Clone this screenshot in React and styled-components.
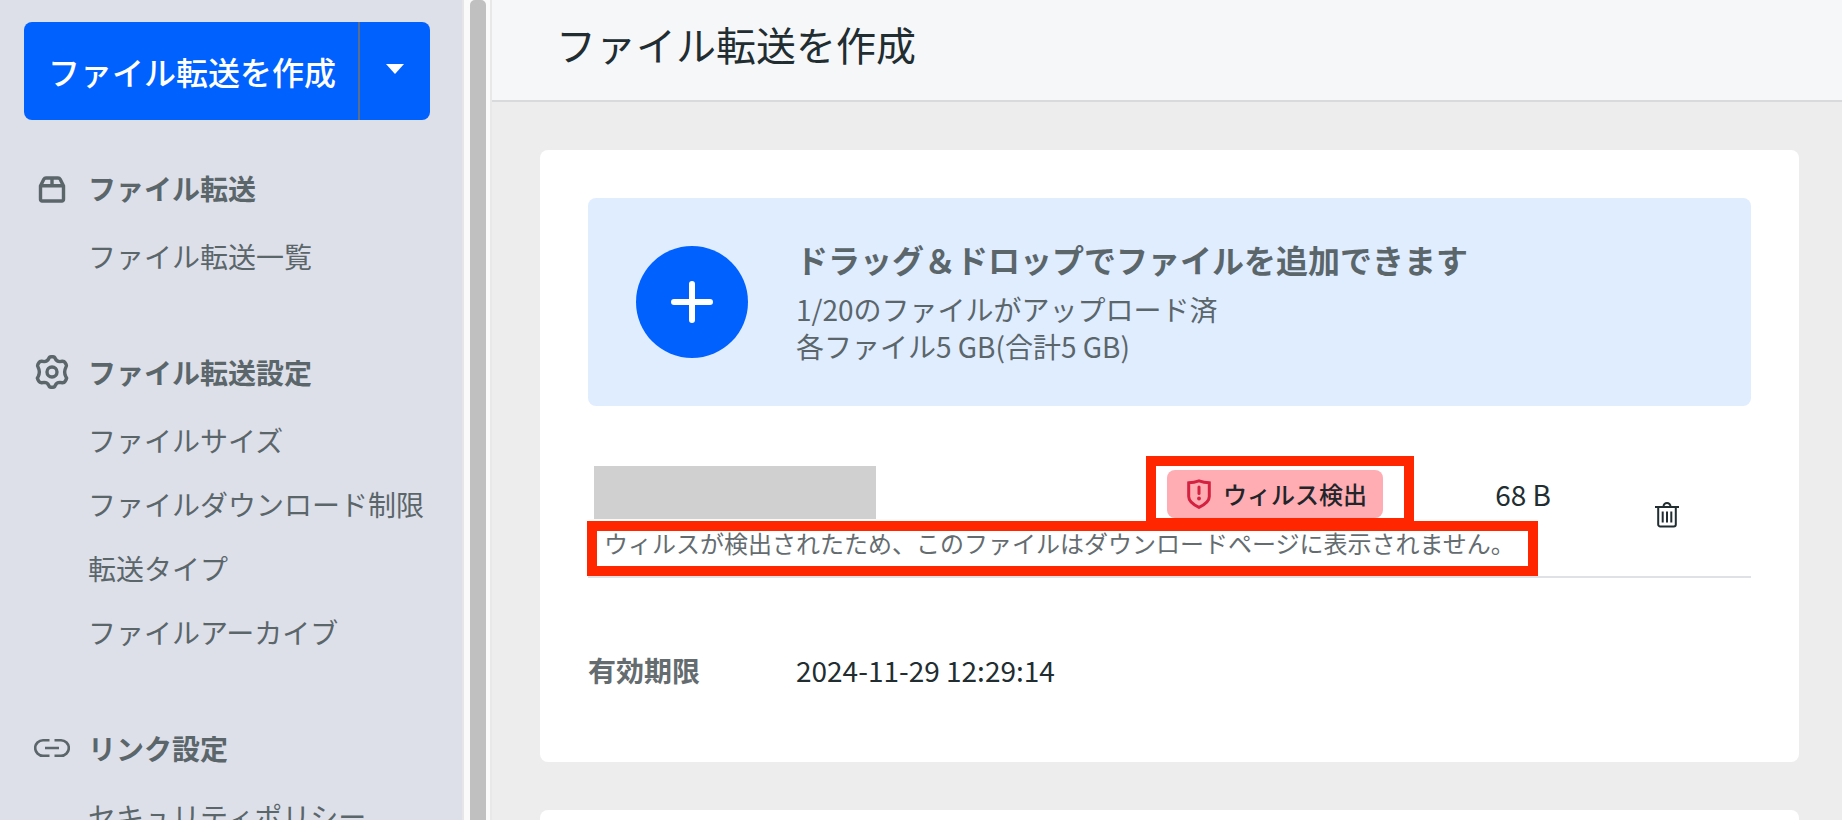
import React from 'react'
import styled, { createGlobalStyle } from 'styled-components'

const sections = [
  { title: 'ファイル転送', icon: 'box', items: ['ファイル転送一覧'] },
  {
    title: 'ファイル転送設定',
    icon: 'gear',
    items: ['ファイルサイズ', 'ファイルダウンロード制限', '転送タイプ', 'ファイルアーカイブ'],
  },
  { title: 'リンク設定', icon: 'link', items: ['セキュリティポリシー'] },
]

const icons = {
  box: (
    <>
      <path d="M6.5 16v13.500a1.500 1.500 0 0 0 1.500 1.500h20a1.500 1.500 0 0 0 1.500-1.500V16L26.200 9.300a2.500 2.500 0 0 0-2.200-1.300H12a2.500 2.500 0 0 0-2.200 1.300z" />
      <path d="M6.500 15.800h23M18 8v8" />
    </>
  ),
  gear: (
    <>
      <path d="M14.800 4.500Q15.300 2.800 17 2.800H19Q20.700 2.800 21.200 4.500Q22.500 7.500 25.800 7.600L28.200 7.300Q30.300 7.200 31.100 8.600L32.200 10.600Q33 12.200 31.800 13.500Q29.500 18 31.800 22.500Q33 23.800 32.200 25.400L31.100 27.400Q30.300 28.800 28.200 28.700L25.800 28.400Q22.500 28.500 21.200 31.500Q20.700 33.200 19 33.200H17Q15.300 33.200 14.800 31.500Q13.500 28.500 10.200 28.400L7.800 28.700Q5.700 28.800 4.900 27.400L3.800 25.400Q3 23.800 4.200 22.500Q6.500 18 4.200 13.500Q3 12.200 3.800 10.600L4.900 8.600Q5.700 7.200 7.800 7.300L10.200 7.600Q13.500 7.500 14.800 4.500z" />
      <circle cx="18" cy="18" r="5" />
    </>
  ),
  link: (
    <path
      strokeWidth="2.600"
      d="M15.500 10.200H9a7.800 7.800 0 0 0 0 15.600h6.500M20.500 10.200H27a7.800 7.800 0 0 1 0 15.600h-6.500M11 18h14"
    />
  ),
}

const Sidebar = () => (
  <SideColumn>
    <SplitButton>
      <CreateButton type="button">ファイル転送を作成</CreateButton>
      <CaretButton type="button" aria-label="その他の作成方法">
        <svg width="18" height="10" viewBox="0 0 18 10">
          <path d="M0 0h18L9 10z" fill="#fff" />
        </svg>
      </CaretButton>
    </SplitButton>
    <Nav>
      {sections.map((section) => (
        <Section key={section.title}>
          <SectionTitle>
            <svg width="36" height="36" viewBox="0 0 36 36" fill="none" stroke="currentColor" strokeWidth="3.400">
              {icons[section.icon]}
            </svg>
            {section.title}
          </SectionTitle>
          {section.items.map((item) => (
            <NavLink href="#" key={item}>{item}</NavLink>
          ))}
        </Section>
      ))}
    </Nav>
  </SideColumn>
)

const FileRow = () => (
  <Row>
    <FileInfo>
      <FileLine>
        <FileName />
        <Status>
          <Badge>
            <svg width="24" height="30" viewBox="0 0 24 30" fill="none" stroke="#d3213f" strokeWidth="3">
              <path d="M12 1.800Q17 3.500 22.300 3.800V17.500Q22.300 23.500 12 28.300Q1.700 23.500 1.700 17.500V3.800Q7 3.500 12 1.800z" />
              <path d="M12 8v6.500" strokeLinecap="round" />
              <circle cx="12" cy="19.500" r="1.900" fill="#d3213f" stroke="none" />
            </svg>
            ウィルス検出
          </Badge>
          <Highlight />
        </Status>
        <FileSize>68 B</FileSize>
      </FileLine>
      <Message>ウィルスが検出されたため、このファイルはダウンロードページに表示されません。</Message>
    </FileInfo>
    <DeleteButton type="button" aria-label="削除">
      <svg width="24" height="26" viewBox="0 0 24 26" fill="none" stroke="#212d31" strokeWidth="2">
        <path d="M0 5h24M3.200 5v17.500a2 2 0 0 0 2 2h13.600a2 2 0 0 0 2-2V5M8.500 4.500a3.500 3.500 0 0 1 7 0" />
        <path d="M7.700 9.500v11M12 9.500v11M16.300 9.500v11" />
      </svg>
    </DeleteButton>
  </Row>
)

const App = () => {
  return (
    <Layout>
      <GlobalStyle />
      <Sidebar />
      <ScrollTrack>
        <ScrollThumb />
      </ScrollTrack>
      <Main>
        <Header>
          <h1>ファイル転送を作成</h1>
        </Header>
        <Content>
          <Card>
            <DropZone>
              <AddButton type="button" aria-label="ファイルを追加">
                <svg width="42" height="42" viewBox="0 0 42 42" stroke="#fff" strokeWidth="6" strokeLinecap="round">
                  <path d="M21 3v36M3 21h36" />
                </svg>
              </AddButton>
              <DropText>
                <h2>ドラッグ＆ドロップでファイルを追加できます</h2>
                <p>1/20のファイルがアップロード済</p>
                <p>各ファイル5 GB(合計5 GB)</p>
              </DropText>
            </DropZone>
            <FileRow />
            <Field>
              <dt>有効期限</dt>
              <dd>2024-11-29 12:29:14</dd>
            </Field>
          </Card>
          <Card />
        </Content>
      </Main>
    </Layout>
  )
}

const GlobalStyle = createGlobalStyle`
  * {
    box-sizing: border-box;
  }

  body {
    margin: 0;
    background-color: #ededed;
    color: #212d31;
    font-family: "Noto Sans CJK JP", sans-serif;
    font-size: 28px;
  }

  h1, h2, p, dl, dd {
    margin: 0;
  }

  button {
    border: none;
    padding: 0;
    font-family: inherit;
    cursor: pointer;
  }

  svg {
    display: block;
    flex-shrink: 0;
  }
`;

const Layout = styled.div`
  display: flex;
  height: 100vh;
  overflow: hidden;
`;

const SideColumn = styled.aside`
  width: 464px;
  flex-shrink: 0;
  padding: 22px 31px 0 24px;
  background-color: #dde0e9;
  border-right: 2px solid #e6e6e8;
  overflow: hidden;
`;

const SplitButton = styled.div`
  display: flex;
  width: 406px;
  height: 98px;
  border-radius: 8px;
  overflow: hidden;
`;

const CreateButton = styled.button`
  flex: 1;
  padding-left: 2px;
  background-color: #0061ff;
  color: #fff;
  font-size: 32px;
  font-weight: 500;
  white-space: nowrap;
`;

const CaretButton = styled.button`
  width: 72px;
  display: flex;
  align-items: center;
  justify-content: center;
  padding-bottom: 4px;
  background-color: #0061ff;
  border-left: 2px solid #5b6f8d;
`;

const Nav = styled.nav`
  display: flex;
  flex-direction: column;
  gap: 64px;
  padding: 48px 0 0 10px;
`;

const Section = styled.section`
  display: flex;
  flex-direction: column;
`;

const SectionTitle = styled.h2`
  display: flex;
  align-items: center;
  gap: 18px;
  margin-bottom: 16px;
  color: #5b666b;
  font-size: 28px;
  font-weight: 700;
  line-height: 40px;
`;

const NavLink = styled.a`
  padding-left: 54px;
  color: #5b666b;
  line-height: 64px;
  text-decoration: none;
  white-space: nowrap;
`;

const ScrollTrack = styled.div`
  width: 28px;
  flex-shrink: 0;
  padding: 0 4px 0 6px;
  background-color: #fafafa;
  border-right: 2px solid #e8e8e8;
`;

const ScrollThumb = styled.div`
  height: 100%;
  border-radius: 5px 5px 0 0;
  background-color: #c0c0c0;
`;

const Main = styled.main`
  flex: 1;
  min-width: 0;
`;

const Header = styled.header`
  padding: 14px 64px 26px;
  background-color: #f6f7f9;
  border-bottom: 2px solid #d9dadc;

  h1 {
    font-size: 40px;
    font-weight: 400;
    line-height: 60px;
  }
`;

const Content = styled.div`
  display: flex;
  flex-direction: column;
  gap: 48px;
  padding: 48px 43px 48px 48px;
`;

const Card = styled.section`
  padding: 48px;
  border-radius: 8px;
  background-color: #fff;
`;

const DropZone = styled.div`
  display: flex;
  align-items: center;
  gap: 48px;
  height: 208px;
  padding: 0 48px;
  border-radius: 8px;
  background-color: #e0edff;
`;

const AddButton = styled.button`
  width: 112px;
  height: 112px;
  display: flex;
  align-items: center;
  justify-content: center;
  border-radius: 50%;
  background-color: #0061ff;
`;

const DropText = styled.div`
  padding-bottom: 4px;
  color: #5b666b;

  h2 {
    margin-bottom: 8px;
    font-size: 32px;
    font-weight: 700;
    line-height: 48px;
  }

  p {
    line-height: 37px;
  }
`;

const Row = styled.div`
  display: flex;
  align-items: center;
  gap: 104px;
  margin-top: 48px;
  padding-right: 72px;
  border-bottom: 2px solid #dee2e6;
`;

const FileInfo = styled.div`
  flex: 1;
  min-width: 0;
  padding-top: 12px;
`;

const FileLine = styled.div`
  display: flex;
  align-items: flex-start;
  padding-left: 6px;
`;

const FileName = styled.div`
  width: 282px;
  height: 53px;
  background-color: #d0d0d0;
`;

const Status = styled.div`
  position: relative;
  margin: 4px 0 0 auto;
`;

const Badge = styled.span`
  display: flex;
  align-items: center;
  gap: 12px;
  height: 48px;
  padding: 0 16px 0 20px;
  border-radius: 8px;
  background-color: #ffacb3;
  color: #212529;
  font-size: 24px;
  font-weight: 500;
  line-height: 46px;
`;

/* frame drawn over the badge */
const Highlight = styled.div`
  position: absolute;
  inset: -14px -31px -10px -21px;
  border: 10px solid #ff2600;
`;

const FileSize = styled.span`
  width: 168px;
  padding-top: 4px;
  line-height: 48px;
  text-align: right;
`;

const Message = styled.p`
  position: relative;
  width: fit-content;
  margin: 2px 0 0 -1px;
  padding: 0 13px 11px 7px;
  border: 10px solid #ff2600;
  color: #646c70;
  font-size: 24px;
  line-height: 24px;
  white-space: nowrap;
`;

const DeleteButton = styled.button`
  background: none;
`;

const Field = styled.dl`
  display: flex;
  margin: 52px 0 0;
  padding: 18px 0 22px;
  line-height: 44px;

  dt {
    width: 208px;
    color: #646c70;
    font-weight: 700;
  }
`;

export default App
